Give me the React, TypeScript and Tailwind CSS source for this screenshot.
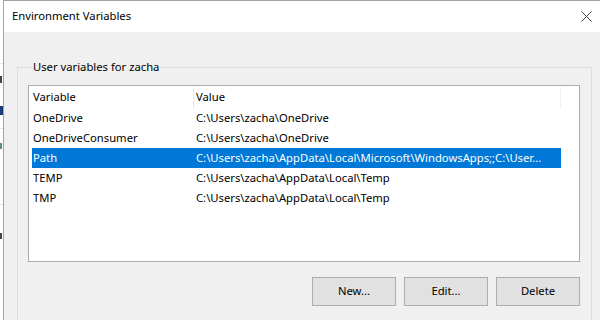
import React from 'react';

type EnvVar = {
    name: string;
    value: string;
};

const userVars: EnvVar[] = [
    {name: 'OneDrive', value: 'C:\\Users\\zacha\\OneDrive'},
    {name: 'OneDriveConsumer', value: 'C:\\Users\\zacha\\OneDrive'},
    {name: 'Path', value: 'C:\\Users\\zacha\\AppData\\Local\\Microsoft\\WindowsApps;;C:\\User...'},
    {name: 'TEMP', value: 'C:\\Users\\zacha\\AppData\\Local\\Temp'},
    {name: 'TMP', value: 'C:\\Users\\zacha\\AppData\\Local\\Temp'},
];

// strip of the window behind the dialog: only slivers of its glyphs show
const BackgroundEdge = () => (
    <div className="w-[3px] flex flex-col bg-white">
        <div className="h-[64px] border-b border-[#e3e3e3]"/>
        <div className="h-[12px]"/>
        <div className="h-[7px] w-[2px] bg-[#444]"/>
        <div className="h-[23px]"/>
        <div className="h-[9px] w-[3px] bg-[#1a3c78]"/>
        <div className="h-[14px] border-b border-[#e3e3e3]"/>
        <div className="h-[14px]"/>
        <div className="h-[6px] w-[2px] bg-[#5a8a8a]"/>
        <div className="h-[56px] border-b border-[#e3e3e3]"/>
        <div className="h-[28px]"/>
        <div className="h-[6px] w-[2px] bg-[#444]"/>
        <div className="flex-1"/>
    </div>
);

const Button = ({label}: { label: string }) => (
    <button
        type="button"
        className="w-[84px] h-[29px] bg-[#e1e1e1] border border-[#adadad] text-[11.25px] text-black"
    >
        {label}
    </button>
);

const App = () => {
    const selected = 'Path';

    return (
        <div
            className="w-[600px] h-[320px] overflow-hidden flex bg-white"
            style={{fontFamily: '"Noto Sans", "Open Sans", sans-serif'}}
        >
            <BackgroundEdge/>
            <div className="flex-1 flex flex-col border-l border-t border-[#a3a3a3]">
                <div className="h-[31px] shrink-0 flex items-center justify-between pl-[8px] pr-[8px] bg-white">
                    <span className="text-[11.25px] text-black">Environment Variables</span>
                    <svg width="11" height="11" viewBox="0 0 11 11" className="text-[#444]">
                        <path d="M0.5 0.5 L10.5 10.5 M10.5 0.5 L0.5 10.5" stroke="currentColor" strokeWidth="1" fill="none"/>
                    </svg>
                </div>
                <div className="flex-1 bg-[#f0f0f0] flex flex-col">
                    <fieldset className="mt-[27px] ml-[13px] mr-[8px] border border-[#dcdcdc] pl-[10px] pr-[11px] pb-[40px]">
                        <legend className="ml-[4px] px-[1px] text-[11.25px] leading-[16px] text-black">
                            User variables for zacha
                        </legend>
                        <div className="mt-[10px] h-[177px] bg-white border border-[#acacac] pl-[3px] text-[11.25px] text-black">
                            <div className="w-[529px] h-[22px] flex items-center">
                                <div className="w-[161px] pl-[1px]">Variable</div>
                                <div className="w-px h-[21px] bg-[#e5e5e5]"/>
                                <div className="flex-1 pl-[2px]">Value</div>
                                <div className="w-px h-[21px] bg-[#f0f0f0]"/>
                            </div>
                            {userVars.map((v) => (
                                <div
                                    key={v.name}
                                    className={
                                        v.name === selected
                                            ? 'w-[529px] h-[20px] flex items-center bg-[#0078d7] text-white'
                                            : 'w-[529px] h-[20px] flex items-center'
                                    }
                                >
                                    <div className="w-[162px] pl-[1px] whitespace-nowrap">{v.name}</div>
                                    <div className="flex-1 pl-[2px] whitespace-nowrap overflow-hidden">{v.value}</div>
                                </div>
                            ))}
                        </div>
                        <div className="mt-[15px] flex justify-end gap-[8px]">
                            <Button label="New..."/>
                            <Button label="Edit..."/>
                            <Button label="Delete"/>
                        </div>
                    </fieldset>
                </div>
            </div>
        </div>
    );
};

export default App;
